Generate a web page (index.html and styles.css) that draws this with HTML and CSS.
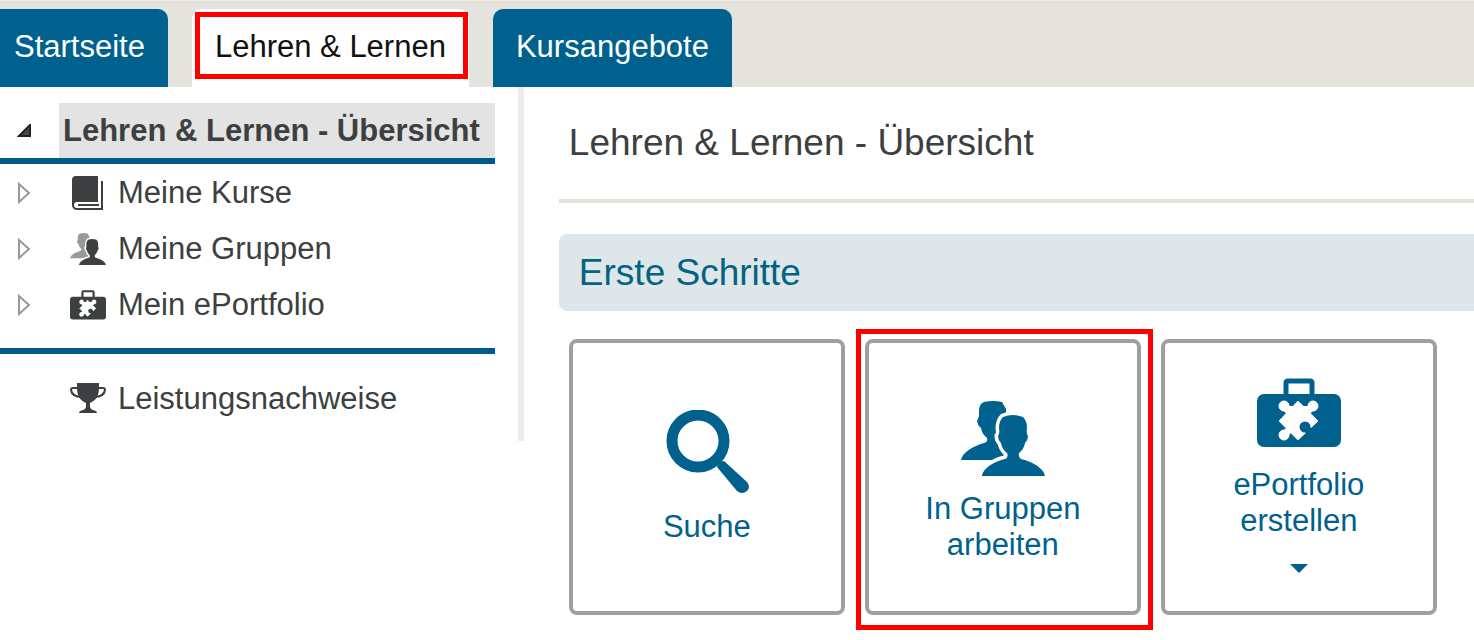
FILE: index.html
```html
<!DOCTYPE html>
<html lang="de">
<head>
	<meta charset="UTF-8">
	<meta name="viewport" content="width=device-width, initial-scale=1.0">
	<title>Lehren &amp; Lernen - Übersicht</title>
	<link rel="stylesheet" href="styles.css">
</head>
<body>
	<svg class="sprite" aria-hidden="true">
		<symbol id="ico_group" viewBox="0 0 84 75">
			<path class="back" d="M0 59C1 52 12 45 23 42Q27 41 26 37Q21 33 20 27Q17 25 16 20Q17 18 18 15V10Q18 3 23 1Q32-1 41 1L45 8V50L40 59Z"/>
			<path class="gap" d="M21 75C22 67 34 60 44 58Q48 56 46 52Q41 48 40 42Q37 39 37 35Q39 33 38 27Q38 20 42 16Q52 12 62 16Q66 20 66 27Q65 33 67 35Q67 39 64 42Q63 48 58 52Q57 56 60 58C70 60 83 67 84 75Z"/>
			<path d="M21 75C22 67 34 60 44 58Q48 56 46 52Q41 48 40 42Q37 39 37 35Q39 33 38 27Q38 20 42 16Q52 12 62 16Q66 20 66 27Q65 33 67 35Q67 39 64 42Q63 48 58 52Q57 56 60 58C70 60 83 67 84 75Z"/>
		</symbol>
		<symbol id="ico_case" viewBox="0 0 84 70">
			<path fill="none" stroke="currentColor" stroke-width="5" d="M29 18V5Q29 3 31 3H53Q55 3 55 5V18"/>
			<rect x="0" y="16" width="84" height="53" rx="7"/>
			<g fill="#fff" stroke="#fff" stroke-linejoin="round">
				<path stroke-width="2" d="M41 24L60 43L41 61L23 43Z"/>
				<path stroke-width="7" d="M27 28L41 43L56 28M41 43L27 57"/>
				<circle cx="27" cy="28" r="5"/>
				<circle cx="56" cy="28" r="5"/>
				<circle cx="27" cy="57" r="5"/>
			</g>
			<circle cx="48" cy="49" r="5.5"/>
			<path d="M47 53L51 47L58 54L53 59Z"/>
		</symbol>
	</svg>

	<nav class="tabs">
		<a href="#" class="tab">Startseite</a>
		<a href="#" class="tab active">Lehren &amp; Lernen</a>
		<a href="#" class="tab">Kursangebote</a>
	</nav>

	<div class="cont_m">
		<aside class="menu">
			<div class="menu_head">
				<button type="button" class="toggle" aria-label="Zuklappen">
					<svg width="14" height="14" viewBox="0 0 14 14"><path fill="#4a4a4a" stroke="#222" stroke-width="2" d="M2 12L13 1V12Z"/></svg>
				</button>
				<a href="#">Lehren &amp; Lernen - Übersicht</a>
			</div>
			<ul class="menu_list">
				<li>
					<button type="button" class="toggle" aria-label="Meine Kurse aufklappen">
						<svg width="14" height="22" viewBox="0 0 14 22"><path fill="#fff" stroke="#999" stroke-width="2" d="M2 2V20L12 11Z"/></svg>
					</button>
					<a href="#">
						<svg width="36" height="36" viewBox="0 0 36 36">
							<path d="M6 1H28V27H7Q4 27 4 30Q4 33 7 33H31V6H33V35H6Q2 34 2 30V5Q2 1 6 1Z"/>
							<path d="M8 29H29V31H8Z"/>
						</svg>
						Meine Kurse
					</a>
				</li>
				<li>
					<button type="button" class="toggle" aria-label="Meine Gruppen aufklappen">
						<svg width="14" height="22" viewBox="0 0 14 22"><path fill="#fff" stroke="#999" stroke-width="2" d="M2 2V20L12 11Z"/></svg>
					</button>
					<a href="#"><svg class="muted" width="36" height="32"><use href="#ico_group"/></svg>Meine Gruppen</a>
				</li>
				<li>
					<button type="button" class="toggle" aria-label="Mein ePortfolio aufklappen">
						<svg width="14" height="22" viewBox="0 0 14 22"><path fill="#fff" stroke="#999" stroke-width="2" d="M2 2V20L12 11Z"/></svg>
					</button>
					<a href="#"><svg width="36" height="30"><use href="#ico_case"/></svg>Mein ePortfolio</a>
				</li>
			</ul>
			<ul class="menu_list second">
				<li>
					<a href="#">
						<svg width="36" height="36" viewBox="0 0 36 36">
							<path d="M7 2H29V6C29 14 27 19 20 22V25Q20 28 23 29Q27 30 27 32H9Q9 30 13 29Q16 28 16 25V22C9 19 7 14 7 6Z"/>
							<path fill="none" stroke="currentColor" stroke-width="2" d="M8 7H3Q1 7 1 9Q2 16 12 16M28 7H33Q35 7 35 9Q34 16 24 16"/>
						</svg>
						Leistungsnachweise
					</a>
				</li>
			</ul>
		</aside>

		<main class="content">
			<h1>Lehren &amp; Lernen - Übersicht</h1>
			<h2>Erste Schritte</h2>
			<div class="tiles">
				<button type="button" class="tile">
					<svg width="84" height="84" viewBox="0 0 84 84">
						<circle cx="33" cy="31" r="26" fill="none" stroke="currentColor" stroke-width="11"/>
						<path d="M52 57Q53 51 59 51L82 72Q86 77 82 81Q77 85 72 81Z"/>
					</svg>
					<span>Suche</span>
				</button>
				<button type="button" class="tile marked">
					<svg width="84" height="84"><use href="#ico_group" y="9" width="84" height="75"/></svg>
					<span>In Gruppen<br>arbeiten</span>
				</button>
				<button type="button" class="tile">
					<svg width="84" height="74"><use href="#ico_case" width="84" height="70"/></svg>
					<span>ePortfolio<br>erstellen</span>
					<svg class="caret" width="18" height="12" viewBox="0 0 18 12"><path d="M0 0H18L9 9Z"/></svg>
				</button>
			</div>
		</main>
	</div>
</body>
</html>
```

FILE: styles.css
```css
body {
	background-color: #fff;
	margin: 0;
	font-family: "Liberation Sans", Arial, sans-serif;
	font-size: 31px;
	line-height: 36px;
	color: #3c4040;
}

a {
	color: inherit;
	text-decoration: none;
}

button {
	font: inherit;
	color: inherit;
	background: none;
	border: 0;
	padding: 0;
	cursor: pointer;
}

svg {
	display: block;
	flex: none;
	fill: currentColor;
}

.sprite {
	position: absolute;
	width: 0;
	height: 0;
}

.back {
	fill: var(--back, currentColor);
}

.gap {
	fill: #fff;
	stroke: #fff;
	stroke-width: 7px;
}

.tabs {
	display: flex;
	gap: 24px;
	background-color: #e4e3dd;
	border-top: 1px solid #f5ebe1;
	padding-top: 8px;
}

.tab {
	position: relative;
	padding: 20px 23px 22px;
	border-radius: 10px 10px 0 0;
	background-color: #00618e;
	color: #fff;
	white-space: nowrap;
}

.tab:first-child {
	padding-left: 14px;
	border-top-left-radius: 0;
}

.tab.active {
	background-color: #fff;
	color: #111;
}

/* red highlight frames */
.tab.active::after,
.tile.marked::after {
	content: "";
	position: absolute;
	border: 5px solid #f00;
}

.tab.active::after {
	inset: 3px 1px 8px 3px;
}

.cont_m {
	display: flex;
	align-items: flex-start;
}

.menu {
	flex: none;
	padding: 16px 23px 14px 0;
	border-right: 6px solid #ececec;
}

.menu_head {
	display: flex;
	border-bottom: 6px solid #005a8c;
	font-weight: bold;
}

.menu_head a {
	flex-grow: 1;
	padding: 10px 15px 9px 4px;
	background-color: #e3e3e3;
	white-space: nowrap;
}

.toggle {
	display: flex;
	align-items: center;
	flex: none;
	width: 59px;
	padding-left: 17px;
}

.menu_list {
	list-style: none;
	margin: 0;
	padding: 1px 0 15px;
	border-bottom: 6px solid #005a8c;
}

.menu_list li {
	display: flex;
	height: 56px;
}

.menu_list a {
	display: flex;
	align-items: center;
	gap: 12px;
	padding-left: 11px;
}

.menu_list.second {
	padding: 17px 0 0 59px;
	border-bottom: 0;
}

.muted {
	--back: #999;
}

.content {
	flex-grow: 1;
	padding: 34px 0 25px 35px;
}

h1,
h2 {
	margin: 0;
	font-size: 37px;
	line-height: 44px;
	font-weight: normal;
}

h1 {
	padding: 0 10px 34px;
	border-bottom: 4px solid #e2e2da;
	margin-bottom: 31px;
}

h2 {
	padding: 17px 20px 16px;
	border-radius: 8px 0 0 8px;
	background-color: #dfe6e9;
	color: #006482;
}

.tiles {
	display: flex;
	flex-wrap: wrap;
	gap: 20px;
	padding: 28px 10px 0;
}

.tile {
	position: relative;
	display: flex;
	flex-direction: column;
	align-items: center;
	justify-content: center;
	gap: 15px;
	width: 276px;
	height: 276px;
	border: 4px solid #a0a0a0;
	border-radius: 8px;
	color: #00618e;
	line-height: 36px;
}

.tile.marked::after {
	inset: -14px -16px -19px -13px;
}

.caret {
	margin-top: 10px;
}
```
